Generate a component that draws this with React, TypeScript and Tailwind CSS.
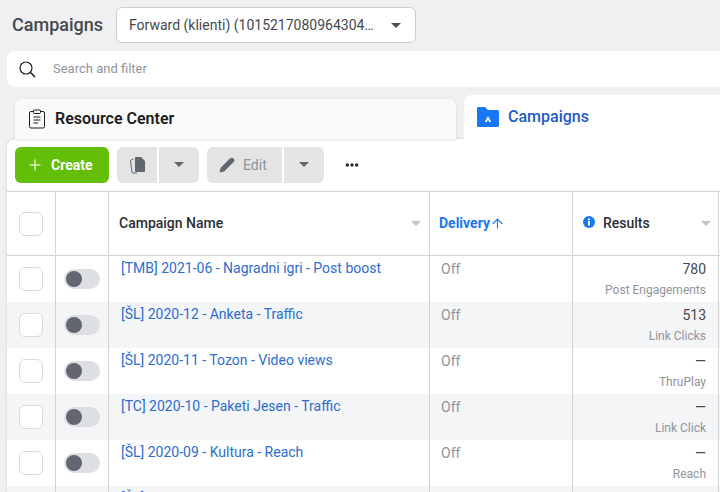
import React from 'react';
import { Plus, Ellipsis, Pencil, ArrowUp } from 'lucide-react';

const rows = [
  { name: '[TMB] 2021-06 - Nagradni igri - Post boost', value: '780', label: 'Post Engagements' },
  { name: '[ŠL] 2020-12 - Anketa - Traffic', value: '513', label: 'Link Clicks' },
  { name: '[ŠL] 2020-11 - Tozon - Video views', value: '—', label: 'ThruPlay' },
  { name: '[TC] 2020-10 - Paketi Jesen - Traffic', value: '—', label: 'Link Click' },
  { name: '[ŠL] 2020-09 - Kultura - Reach', value: '—', label: 'Reach' },
  { name: '[ŠL] 2020-08 - Kultura - Traffic', value: '—', label: 'Link Clicks' },
];

const Caret = ({ className = 'border-t-[#606770]' }: { className?: string }) => (
  <span className={`block w-0 h-0 border-x-[5px] border-x-transparent border-t-[5px] ${className}`} />
);

const Checkbox = () => <div className="w-6 h-6 rounded-md border border-[#d8dade] bg-white" />;

const App = () => {
  return (
    <div className="w-[720px] h-[492px] overflow-hidden bg-[#f0f0f0] font-['Roboto',sans-serif]">
      {/* Top bar */}
      <div className="flex items-center h-[51px] pl-3 pb-[1px]">
        <h1 className="text-lg font-medium text-[#444950] w-[104px]">Campaigns</h1>
        <button className="flex items-center justify-between w-[300px] h-[36px] pl-3 pr-[14px] bg-white border border-[#ccd0d5] rounded-md text-sm text-[#444950]">
          <span>Forward (klienti) (1015217080964304…</span>
          <Caret className="border-t-[#4b4f56]" />
        </button>
      </div>

      {/* Search */}
      <div className="flex items-center h-9 ml-[7px] bg-white rounded-l-lg">
        <svg className="ml-[12px] w-[17px] h-[17px]" viewBox="0 0 17 17" fill="none" stroke="#1c1e21" strokeWidth="1.2">
          <circle cx="7" cy="7" r="6" />
          <path d="M11.500 11.500 L16 16" strokeWidth="1.6" />
        </svg>
        <span className="ml-[17px] text-[13px] text-[#90949c]">Search and filter</span>
      </div>

      {/* Tabs */}
      <div className="flex items-end h-[52px] pl-[15px] gap-2">
        <div className="flex items-center w-[441px] h-10 pl-[14px] pb-[1px] bg-[#fafafa] rounded-t-lg shadow-sm">
          <svg className="w-4 h-[20px]" viewBox="0 0 16 20" fill="none" stroke="#1c1e21" strokeWidth="1">
            <path d="M4.500 2.500H2a1.500 1.500 0 0 0-1.500 1.500v13.500A1.500 1.500 0 0 0 2 19h12a1.500 1.500 0 0 0 1.500-1.500V4A1.500 1.500 0 0 0 14 2.500h-2.500" />
            <rect x="4.500" y="1" width="7" height="3.500" rx="1" />
            <path d="M4.500 8h7M4.500 11h7M4.500 14h4.500" />
          </svg>
          <span className="ml-[10px] text-base font-semibold text-[#1c1e21]">Resource Center</span>
        </div>
        <div className="flex items-center flex-1 h-[44px] pl-[13px] pb-[1px] bg-white rounded-tl-lg">
          <svg className="w-[22px] h-5" viewBox="0 0 22 20">
            <path d="M1 0h7l3 3h9.500A1.500 1.500 0 0 1 22 4.500V18.500A1.500 1.500 0 0 1 20.500 20H1a1 1 0 0 1-1-1V1a1 1 0 0 1 1-1z" fill="#1877f2" />
            <path d="M11 9l3.200 6h-2L11 12.800 9.800 15h-2z" fill="#fff" />
          </svg>
          <span className="ml-[9px] text-base font-medium text-[#1d5cc9]">Campaigns</span>
        </div>
      </div>

      {/* Panel */}
      <div className="ml-[7px] bg-white rounded-tl-lg shadow-[0_0_3px_rgba(0,0,0,0.15)]">
        {/* Toolbar */}
        <div className="flex items-center h-[53px] pl-2 pb-[1px] border-b border-[#d4d4d4]">
          <button className="flex items-center w-[94px] h-9 pl-[13px] bg-[#63be09] rounded-md text-white text-sm font-bold">
            <Plus size={14} strokeWidth={1.5} className="scale-125" />
            <span className="ml-[9px]">Create</span>
          </button>
          <div className="flex ml-2 gap-[2px]">
            <div className="flex items-center justify-center w-10 h-9 bg-[#e4e4e4] rounded-l-md">
              <svg className="w-[17px] h-[18px]" viewBox="0 0 17 18" fill="#606770">
                <path d="M7 1h5l4 4v10a1 1 0 0 1-1 1H7a1 1 0 0 1-1-1V2a1 1 0 0 1 1-1z" />
                <path d="M4.500 3 2 4a1 1 0 0 0-.5 1l1.500 11a1 1 0 0 0 1 1h4" fill="none" stroke="#606770" strokeWidth="1" />
              </svg>
            </div>
            <div className="flex items-center justify-center w-10 h-9 bg-[#e4e4e4] rounded-r-md">
              <Caret />
            </div>
          </div>
          <div className="flex ml-[8px] gap-[2px]">
            <div className="flex items-center w-[75px] h-9 pl-[12px] bg-[#e4e4e4] rounded-l-md text-sm text-[#8d949e]">
              <Pencil size={16} fill="#606770" stroke="#606770" />
              <span className="ml-[8px]">Edit</span>
            </div>
            <div className="flex items-center justify-center w-10 h-9 bg-[#e4e4e4] rounded-r-md">
              <Caret />
            </div>
          </div>
          <Ellipsis className="ml-[20px] text-[#1c1e21]" size={16} strokeWidth={3} />
        </div>

        {/* Table header */}
        <div className="flex h-[64px] border-b border-[#d4d4d4]">
          <div className="flex items-center justify-center w-[49px] border-r border-[#d4d4d4]">
            <Checkbox />
          </div>
          <div className="w-[53px] border-r border-[#d4d4d4]" />
          <div className="flex items-center justify-between w-[321px] pl-[10px] pr-[8px] pb-[1px] border-r border-[#d4d4d4] text-sm font-medium text-[#2b2e33]">
            <span>Campaign Name</span>
            <Caret className="border-t-[#bec3c9]" />
          </div>
          <div className="flex items-center w-[143px] pl-[9px] pb-[1px] border-r border-[#d4d4d4] text-sm font-bold text-[#1877f2]">
            <span>Delivery</span>
            <ArrowUp size={15} strokeWidth={1.8} />
          </div>
          <div className="flex items-center justify-between w-[146px] pl-[10px] pr-[7px] pb-[1px] border-r border-[#d4d4d4] text-sm font-medium text-[#2b2e33]">
            <div className="flex items-center">
              <svg className="w-3 h-3 mb-[3px]" viewBox="0 0 12 12">
                <circle cx="6" cy="6" r="6" fill="#1877f2" />
                <rect x="5" y="5" width="2" height="4.500" fill="#fff" />
                <rect x="5" y="2.500" width="2" height="1.600" fill="#fff" />
              </svg>
              <span className="ml-[8px]">Results</span>
            </div>
            <Caret className="border-t-[#bec3c9]" />
          </div>
        </div>

        {/* Rows */}
        {rows.map((row, i) => (
          <div key={row.name} className={`flex h-[46px] ${i % 2 === 1 ? 'bg-[#f4f5f7]' : 'bg-white'}`}>
            <div className="flex items-center justify-center w-[49px] border-r border-[#d4d4d4]">
              <Checkbox />
            </div>
            <div className="flex items-center justify-center w-[53px] border-r border-[#d4d4d4]">
              <div className="flex items-center w-9 h-5 pl-[2px] bg-[#dddfe2] rounded-full">
                <span className="w-4 h-4 rounded-full bg-[#606770]" />
              </div>
            </div>
            <div className="w-[321px] pl-3 pt-[2px] border-r border-[#d4d4d4] text-sm text-[#2c6ed0]">{row.name}</div>
            <div className="w-[143px] pl-[11px] pt-[3px] border-r border-[#d4d4d4] text-sm text-[#90949c]">Off</div>
            <div className="w-[146px] pr-[12px] pt-[3px] border-r border-[#d4d4d4] text-right">
              <div className="text-sm leading-5 text-[#444950]">{row.value}</div>
              <div className="mt-[3px] text-xs leading-4 text-[#90949c]">{row.label}</div>
            </div>
          </div>
        ))}
      </div>
    </div>
  );
};

export default App;
